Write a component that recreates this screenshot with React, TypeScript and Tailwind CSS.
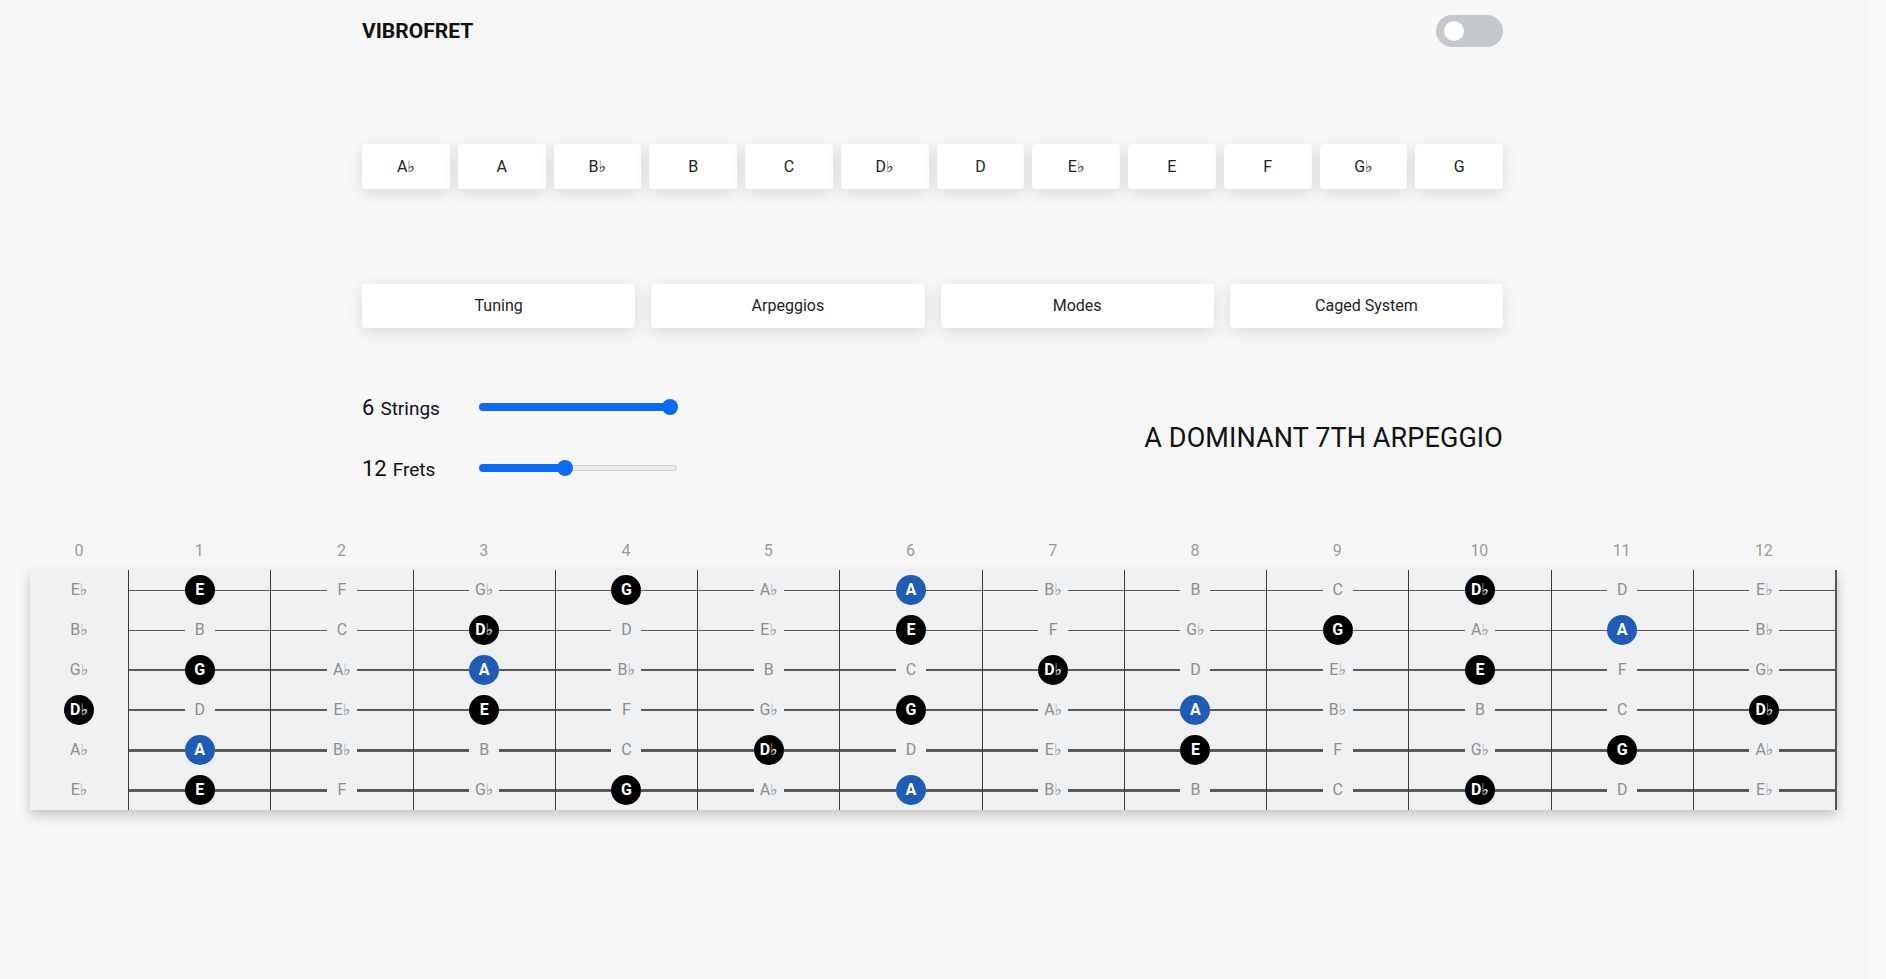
import React from "react";

const NOTES = ["A", "B♭", "B", "C", "D♭", "D", "E♭", "E", "F", "G♭", "G", "A♭"];
const KEYS = ["A♭", "A", "B♭", "B", "C", "D♭", "D", "E♭", "E", "F", "G♭", "G"];
const MODES = ["Tuning", "Arpeggios", "Modes", "Caged System"];
const ARPEGGIO = ["A", "D♭", "E", "G"];
const ROOT = "A";

// top string first
const STRINGS = [
  { open: "E♭", line: "h-px" },
  { open: "B♭", line: "h-px" },
  { open: "G♭", line: "h-[2px]" },
  { open: "D♭", line: "h-[2px]" },
  { open: "A♭", line: "h-[3px]" },
  { open: "E♭", line: "h-[3px]" },
];

const FRETS = Array.from({ length: 13 }, (_, i) => i);

function noteAt(open: string, fret: number) {
  return NOTES[(NOTES.indexOf(open) + fret) % 12];
}

function Note({ name }: { name: string }) {
  if (name === ROOT) {
    return (
      <div className="w-[30px] h-[30px] shrink-0 rounded-full bg-[#1f5cb4] text-white font-bold text-[16px] flex items-center justify-center">
        {name}
      </div>
    );
  }
  if (ARPEGGIO.includes(name)) {
    return (
      <div className="w-[30px] h-[30px] shrink-0 rounded-full bg-black text-white font-bold text-[16px] flex items-center justify-center">
        {name}
      </div>
    );
  }
  return (
    <div className="w-[30px] h-[30px] shrink-0 text-[#8e8e8e] text-[16px] flex items-center justify-center">
      {name}
    </div>
  );
}

function Slider({ value, label, thumb, fill }: { value: number; label: string; thumb: string; fill: string }) {
  return (
    <div className="flex items-center h-[30px]">
      <div className="w-[117px] text-[#111] flex items-baseline gap-1.5">
        <span className="text-[22px]">{value}</span>
        <span className="text-[19px]">{label}</span>
      </div>
      <div className="relative w-[198px] h-[16px] flex items-center">
        <div className="w-full h-[6px] rounded-full bg-[#ececec] border border-[#cfcfcf]" />
        <div className={`absolute left-0 h-[8px] rounded-full bg-[#0b6cf0] ${fill}`} />
        <div className={`absolute top-0 w-[16px] h-[16px] rounded-full bg-[#0b6cf0] ${thumb}`} />
      </div>
    </div>
  );
}

export default function App() {
  return (
    <div className="flex min-h-screen bg-[#f7f7f7] text-[#1a1a1a]" style={{ fontFamily: "Roboto, 'DejaVu Sans', sans-serif" }}>
      <div className="w-[1869px] shrink-0">
        <div className="mx-auto w-[1141px] translate-x-[-2px]">
          <header className="h-[62px] flex items-center justify-between">
            <h1 className="text-[21px] font-bold text-[#111] pt-[2px]">VIBROFRET</h1>
            <div className="w-[67px] h-[32px] rounded-full bg-[#c5c8cc] flex items-center pl-[8px]">
              <div className="w-[20px] h-[20px] rounded-full bg-white" />
            </div>
          </header>

          <div className="mt-[82px] grid grid-cols-12 gap-2">
            {KEYS.map((k) => (
              <button
                key={k}
                className="h-[45px] bg-white rounded text-[16px] text-[#222] shadow-[0_4px_16px_rgba(0,0,0,0.12)]"
              >
                {k}
              </button>
            ))}
          </div>

          <div className="mt-[95px] grid grid-cols-4 gap-4">
            {MODES.map((m) => (
              <button
                key={m}
                className="h-[44px] bg-white rounded text-[16px] text-[#222] shadow-[0_4px_16px_rgba(0,0,0,0.12)]"
              >
                {m}
              </button>
            ))}
          </div>

          <div className="mt-[64px] flex items-center justify-between">
            <div className="flex flex-col gap-[31px]">
              <Slider value={6} label="Strings" fill="w-[198px]" thumb="left-[183px]" />
              <Slider value={12} label="Frets" fill="w-[90px]" thumb="left-[78px]" />
            </div>
            <h2 className="text-[27px] text-[#111] tracking-[0.1px] pt-[2px]">A DOMINANT 7TH ARPEGGIO</h2>
          </div>
        </div>

        <div className="mt-[56px] ml-[30px] w-[1807px]">
          <div className="grid grid-cols-[98px_repeat(12,minmax(0,1fr))] h-[24px] pr-[2px]">
            {FRETS.map((f) => (
              <div key={f} className="flex items-center justify-center text-[16px] text-[#9a9a9a]">
                {f}
              </div>
            ))}
          </div>
          <div className="mt-[7px] grid grid-cols-[98px_repeat(12,minmax(0,1fr))] bg-[#eff0f2] border-r-2 border-[#555] shadow-[0_5px_12px_rgba(0,0,0,0.22)]">
            {FRETS.map((f) => (
              <div key={f} className={f === 0 ? "flex flex-col" : "flex flex-col border-l border-[#3c3c3c]"}>
                {STRINGS.map((s, i) => (
                  <div key={i} className="h-[40px] flex items-center">
                    {f === 0 ? (
                      <div className="flex-1 flex justify-center">
                        <Note name={noteAt(s.open, 0)} />
                      </div>
                    ) : (
                      <>
                        <div className={`flex-1 bg-[#5a5a5a] ${s.line}`} />
                        <Note name={noteAt(s.open, f)} />
                        <div className={`flex-1 bg-[#5a5a5a] ${s.line}`} />
                      </>
                    )}
                  </div>
                ))}
              </div>
            ))}
          </div>
        </div>
      </div>
      <div className="w-[17px] bg-[#fafafa]" />
    </div>
  );
}
